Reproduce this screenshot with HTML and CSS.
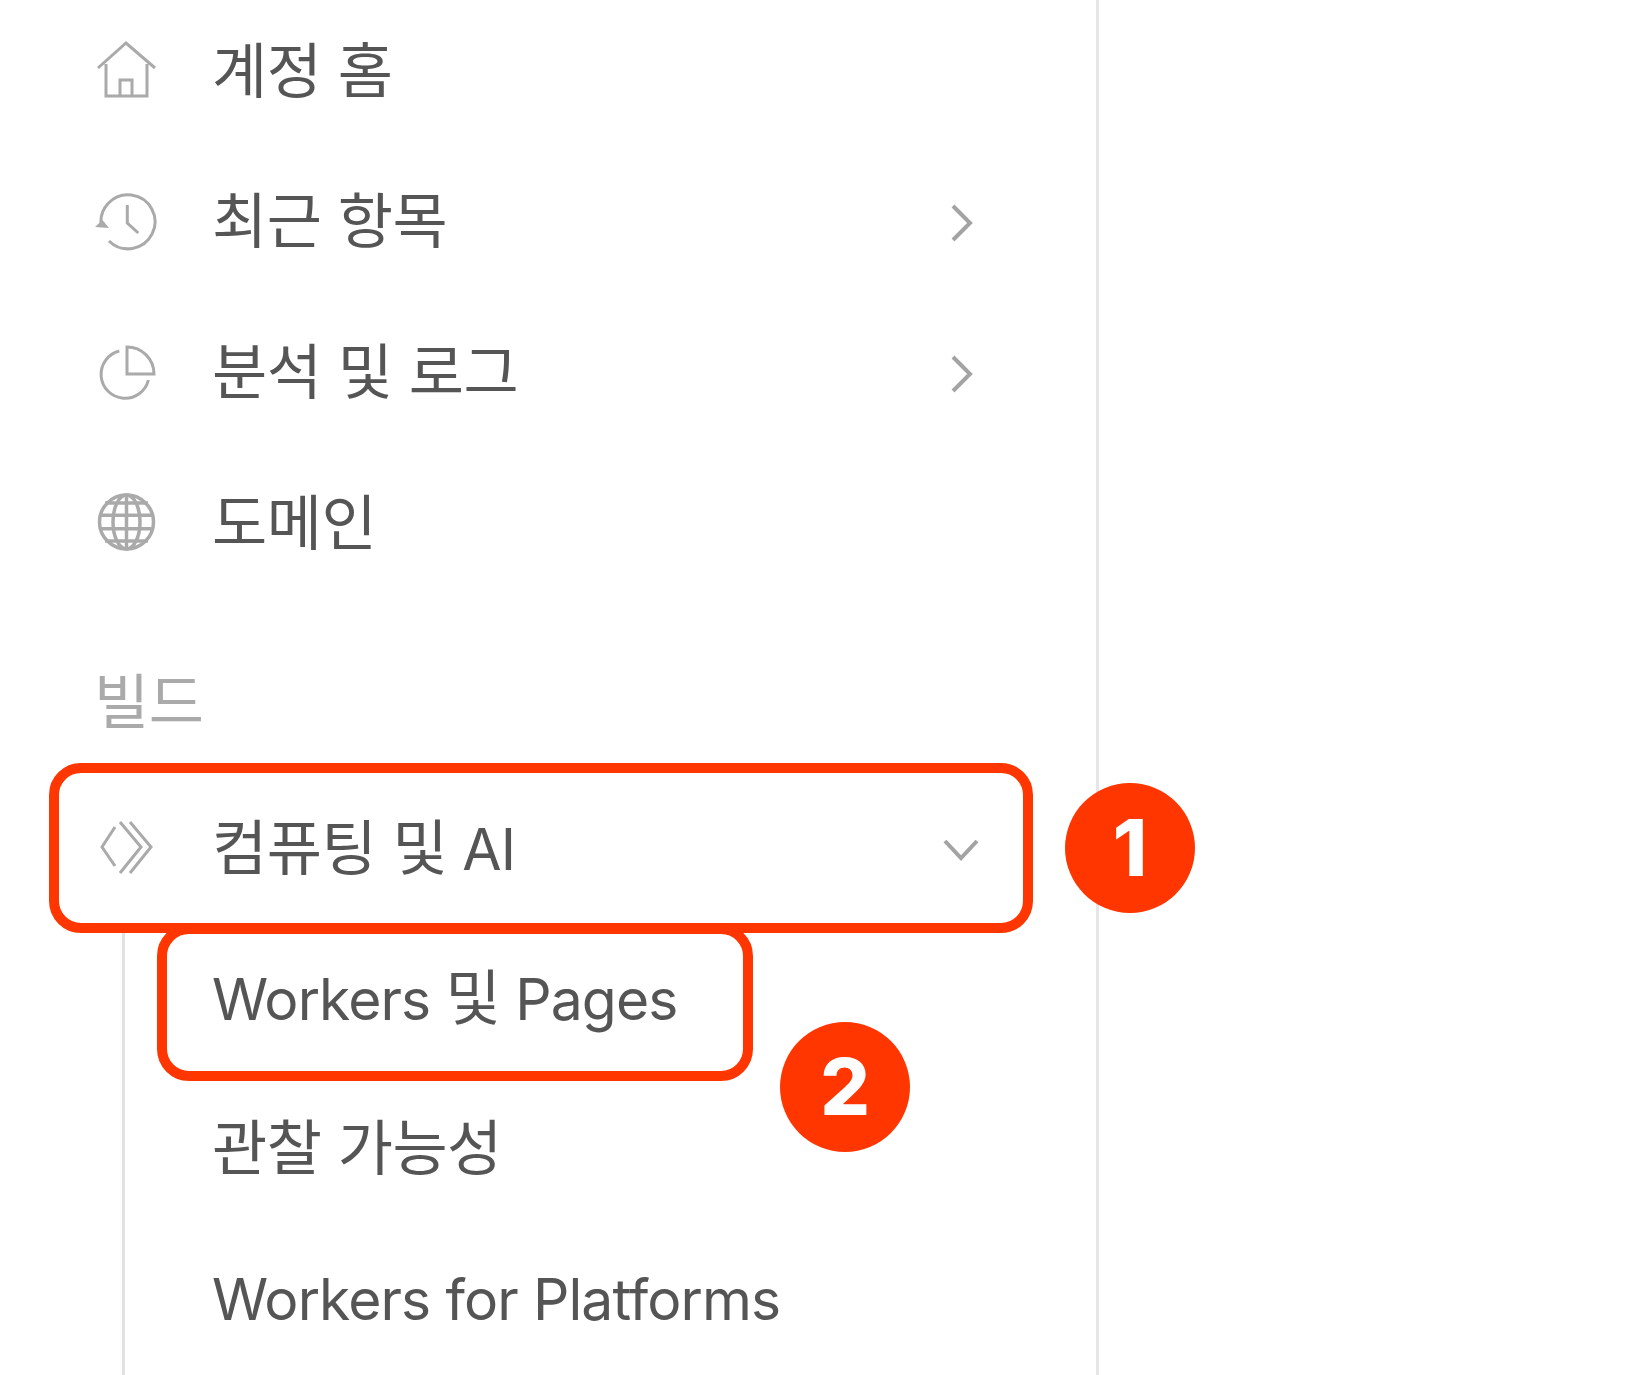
FILE: index.html
```html
<!DOCTYPE html>
<html lang="ko">
<head>
	<meta charset="UTF-8">
	<title>계정 홈</title>
	<link rel="stylesheet" href="styles.css">
</head>
<body>
	<div class="sidebar">
		<a class="item">
			<svg class="icon" viewBox="0 0 64 64"><path d="M4 30 32 5 61 30M12 26V58H53V26M26 58V42H38V58"/></svg>
			<span class="label ko">계정 홈</span>
		</a>
		<a class="item">
			<svg class="icon" viewBox="0 0 64 64"><path d="M7.500 38A27 27 0 1 1 15 52M33.300 16V34L44.300 44"/><path class="fill" d="M1 38 8.500 31 15 39Z"/></svg>
			<span class="label ko">최근 항목</span>
			<svg class="chev" viewBox="0 0 24 40"><path d="M4 3 21 20 4 37"/></svg>
		</a>
		<a class="item">
			<svg class="icon" viewBox="0 0 64 64"><path d="M25.300 11A24 24 0 1 0 54.400 40M33 7V34H60A27 27 0 0 0 33 7Z"/></svg>
			<span class="label ko">분석 및 로그</span>
			<svg class="chev" viewBox="0 0 24 40"><path d="M4 3 21 20 4 37"/></svg>
		</a>
		<a class="item">
			<svg class="icon icon-globe" viewBox="0 0 64 64"><circle cx="32.500" cy="32" r="27"/><ellipse cx="32.500" cy="32" rx="13.500" ry="27"/><path d="M32.500 5V59M11 13H54M5.500 25.300H59.500M5.500 38.700H59.500M11 51H54"/></svg>
			<span class="label ko">도메인</span>
		</a>

		<div class="section ko">빌드</div>

		<a class="item">
			<svg class="icon" viewBox="0 0 64 64"><path d="M21 11 8 31 21 50M26 6 47 31 26 57M36 6 57 31 36 57"/></svg>
			<span class="label"><span class="ko">컴퓨팅 및</span> AI</span>
			<svg class="chev-down" viewBox="0 0 36 22"><path d="M2 2 18 19 34 2"/></svg>
		</a>
		<div class="subnav">
			<a class="subitem"><span class="raised">Workers <span class="ko">및</span> Pages</span></a>
			<a class="subitem"><span class="raised ko">관찰 가능성</span></a>
			<a class="subitem"><span class="lowered">Workers for Platforms</span></a>
		</div>
	</div>

	<!-- 강조 표시 -->
	<div class="mark mark-one"></div>
	<div class="mark mark-two"></div>
	<div class="badge badge-one">1</div>
	<div class="badge badge-two">2</div>
</body>
</html>
```

FILE: styles.css
```css
html, body {
	margin: 0;
	height: 1375px;
	overflow: hidden;
	background: #fff;
}
body {
	position: relative;
	font-family: Inter, "Noto Sans CJK KR", sans-serif;
	font-size: 57px;
	letter-spacing: -0.9px;
	color: #555;
}
.ko {
	font-family: "Noto Sans CJK KR", sans-serif;
	font-size: 60px;
	letter-spacing: -0.5px;
}
.sidebar {
	width: 1099px;
	height: 1375px;
	box-sizing: border-box;
	border-right: 3px solid #e6e6e6;
	padding: 0 123px 0 94px;
	overflow: hidden;
}
.item {
	display: flex;
	align-items: center;
	height: 150.67px;
}
.item:first-child {
	margin-top: -5px;
}
.label {
	margin-left: 54px;
	padding-bottom: 8px;
	flex: 1;
}
.icon {
	width: 64px;
	height: 64px;
	fill: none;
	stroke: #aaa;
	stroke-width: 3;
}
.icon-globe {
	stroke-width: 3.5;
}
.icon .fill {
	fill: #aaa;
	stroke: none;
}
.chev {
	width: 24px;
	height: 40px;
	margin-top: 4px;
	fill: none;
	stroke: #a3a3a3;
	stroke-width: 4;
}
.chev-down {
	width: 36px;
	height: 22px;
	margin-top: 4px;
	margin-right: -6px;
	fill: none;
	stroke: #a3a3a3;
	stroke-width: 4;
}
.section {
	color: #aaa;
	height: 125px;
	padding-top: 50px;
	line-height: 100px;
}
.subnav {
	margin-left: 28px;
	border-left: 3px solid #e2e2e2;
	padding: 0 0 100px 87px;
}
.subitem {
	display: flex;
	align-items: center;
	height: 150px;
}
.raised {
	padding-bottom: 9px;
}
.lowered {
	padding-top: 2px;
}
.mark {
	position: absolute;
	box-sizing: border-box;
	border: 10px solid #ff3600;
	border-radius: 32px;
}
.mark-one {
	left: 49px;
	top: 763px;
	width: 984px;
	height: 170px;
}
.mark-two {
	left: 157px;
	top: 924px;
	width: 596px;
	height: 157px;
}
.badge {
	position: absolute;
	width: 130px;
	height: 130px;
	border-radius: 50%;
	background: #ff3600;
	color: #fff;
	font-family: Inter, sans-serif;
	font-weight: 800;
	font-size: 78px;
	line-height: 130px;
	letter-spacing: 0;
	text-align: center;
}
.badge-one {
	left: 1065px;
	top: 783px;
}
.badge-two {
	left: 780px;
	top: 1022px;
}
```
